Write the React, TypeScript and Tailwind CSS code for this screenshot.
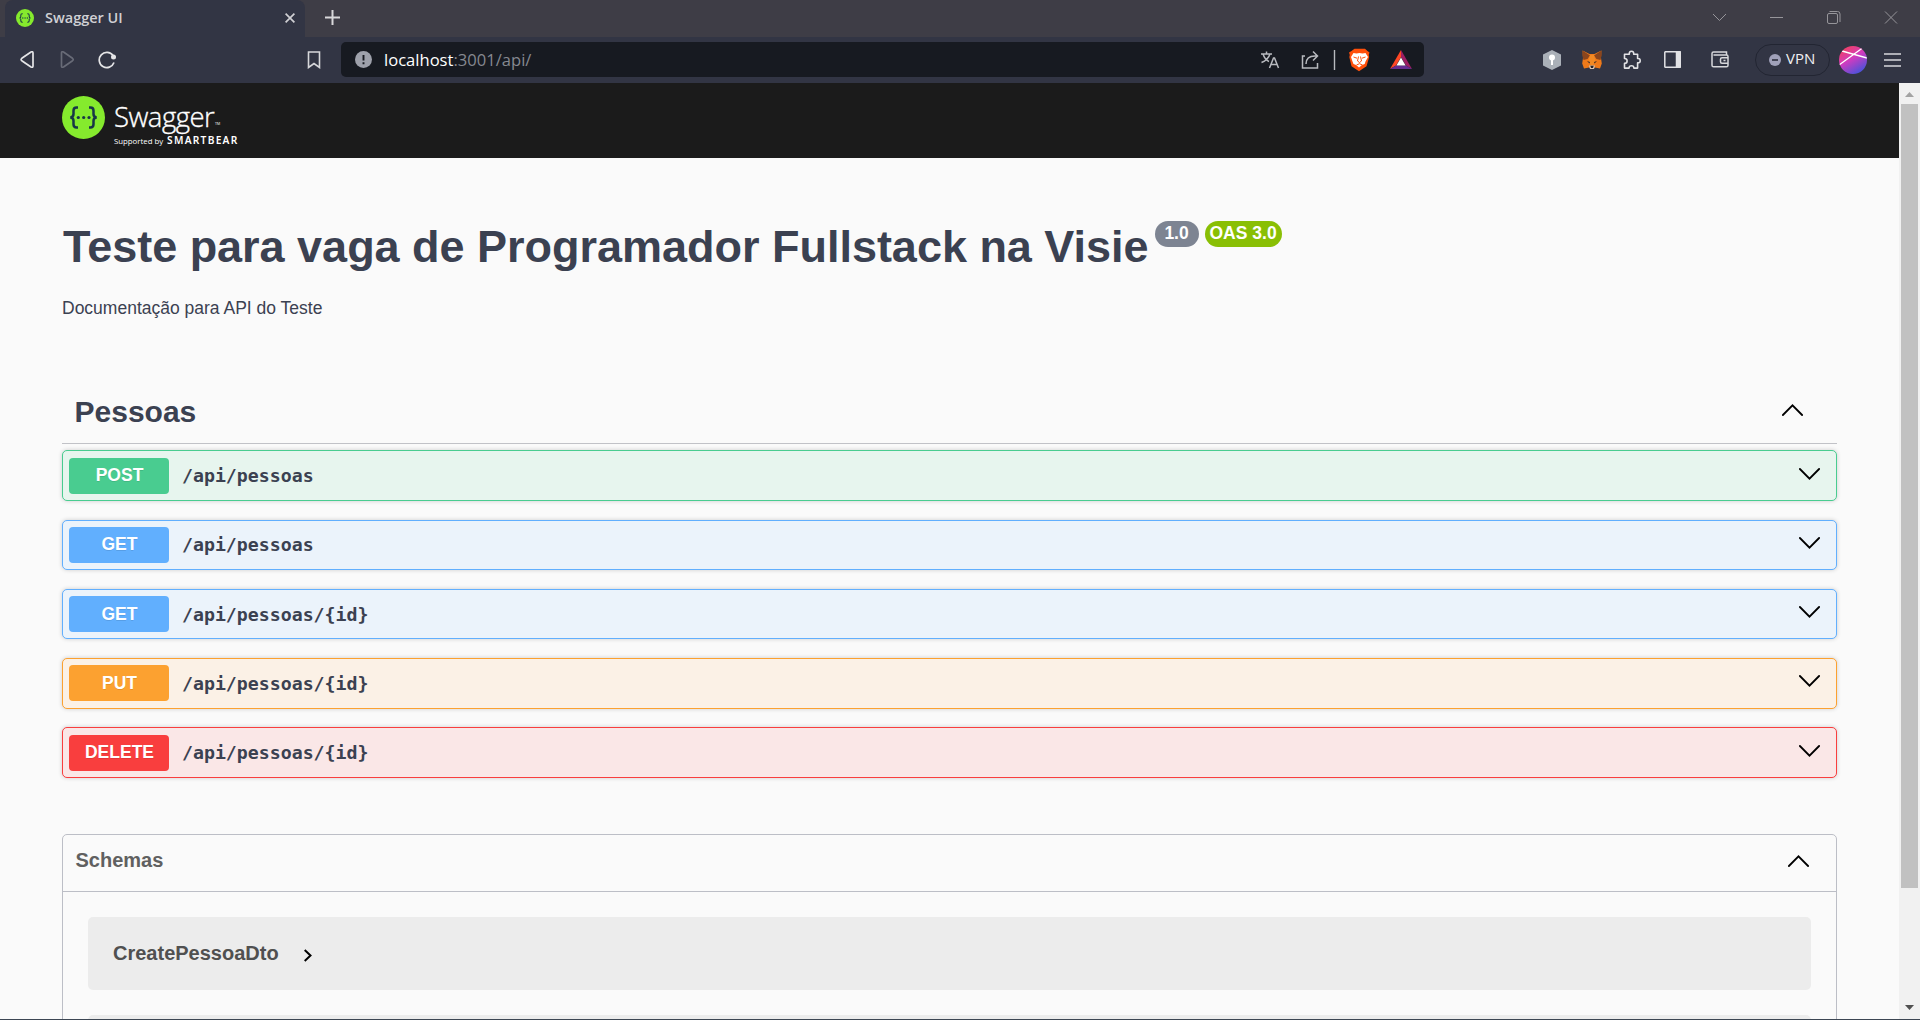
import React from "react";

const ARIAL = "font-['Liberation_Sans',Arial,sans-serif]";
const UI = "font-['Open_Sans','Noto_Sans',sans-serif]";

function SwaggerMark({ className }: { className: string }) {
  return (
    <svg className={className} viewBox="0 0 43 43">
      <circle cx="21.5" cy="21.5" r="21.5" fill="#85ea2d" />
      <g fill="none" stroke="#173647" strokeWidth="2.5">
        <path d="M16 11.5h-1.4q-3.1 0-3.1 3.2v3.3q0 3.2-3.2 3.4q3.2.2 3.2 3.4v3.5q0 3.2 3.1 3.2H16" />
        <path d="M27 11.5h1.4q3.1 0 3.1 3.2v3.3q0 3.2 3.2 3.4q-3.2.2-3.2 3.4v3.5q0 3.2-3.1 3.2H27" />
      </g>
      <g fill="#173647">
        <circle cx="16.3" cy="21.5" r="1.6" />
        <circle cx="21.7" cy="21.5" r="1.6" />
        <circle cx="27" cy="21.5" r="1.6" />
      </g>
    </svg>
  );
}

function TabStrip() {
  return (
    <div className="flex h-[37px] shrink-0 bg-[#3e3d46] pl-[5px]">
      <div className="flex w-[300px] items-center rounded-t-lg bg-[#323544] pb-px pl-[11px] pr-[10px]">
        <SwaggerMark className="size-[18px]" />
        <span className={`${UI} ml-[11px] flex-1 text-[14.2px] font-semibold leading-5 text-[#d0d0d4]`}>
          <span className="inline-block origin-left scale-x-[1.02]">Swagger UI</span>
        </span>
        <svg className="size-[10px]" viewBox="0 0 10 10" stroke="#d0d0d4" strokeWidth="1.7">
          <path d="M.6.6l8.8 8.8M9.4.6L.6 9.4" />
        </svg>
      </div>
      <svg className="ml-5 mt-[10px] size-[15px]" viewBox="0 0 15 15" stroke="#d8d8da" strokeWidth="2">
        <path d="M7.5 0v15M0 7.5h15" />
      </svg>
      <svg className="ml-auto mr-[18px] mt-2 h-5 w-[196px]" viewBox="0 0 196 20" fill="none" stroke="#96959a" strokeWidth="1">
        <path d="M7 6l6.500 6.500l6.500-6.500M64 9.500h13" />
        <rect x="121.500" y="5.500" width="10" height="10" rx="1.500" />
        <path d="M123.500 3.500h8q2.500 0 2.500 2.500v8M179 3.500l12 12M191 3.500l-12 12" />
      </svg>
    </div>
  );
}

function MetaMask() {
  return (
    <svg className="h-5 w-5" viewBox="0 0 20 20">
      <path d="M.6.500L7.500 4h5L19.400.500 19 8l.8 5.500L18 18.500l-5-1-3 1.500-3-1.500-5 1L.2 13.500 1 8z" fill="#ef7a1a" />
      <path d="M.6.500l7.400 5L5.500 9 1.500 10 .3 5zM19.400.500L12 5.500 14.500 9l4 1 1.200-5z" fill="#8a451d" />
      <path d="M8 5h4l1.500 6L10 17l-3.500-6z" fill="#f28a24" />
      <path d="M5 11l3 1-.5 1.500zM15 11l-3 1 .5 1.500z" fill="#3c2b28" />
      <path d="M7 15.500h6L12 19H8z" fill="#d9c4b2" />
      <path d="M8.300 15.700h3.400l-.7 2.300H9z" fill="#26252b" />
    </svg>
  );
}

function AddressIcons() {
  return (
    <svg className="mr-[10px] h-6 w-[155px]" viewBox="0 0 155 24" fill="none" stroke="#b8babf" strokeWidth="1.500">
      <path d="M2 6h11M7.500 3.500V6M4 6q2 6 6 7.500M11 6q-2 6-8.500 8.500M10.500 20l4-10h1l4 10M12 16.500h6" />
      <path d="M46 8h-2.500v12h15V15M47 16q0-8 9-8h2M54 3.500l4.500 4.500-4.500 4.500" />
      <path d="M75.500 2v20" strokeWidth="1.400" />
      <path d="M95.500.8h10.500l2.500 2.200 2 1.500-.8 2.500.5 2-2.700 9.300-7.500 5-7.500-5L90.300 9l.5-2L90 4.500 92.500 3z" fill="#ff4f0a" stroke="none" />
      <path d="M94.500 5l3 .5 3-.5 3 .5 3-.5 2.500 4-2.500 4.500-.8 2.500-2.700 1-3 2.500-3-2.500-2.500-1-1-2.500L92 9z" fill="#fff" stroke="none" />
      <path d="M94.500 9l3.500 1.200M106.500 9l-3.500 1.200M99.500 8.500l-1 4.500 2 1.500 2-1.500-1-4.500M97.500 17l3-1.300 3 1.300" stroke="#ff4f0a" strokeWidth="1" />
      <g stroke="none">
        <path d="M142 2v7l-5 8.500-6 3.500z" fill="#ff4724" />
        <path d="M142 2v7l5 8.500 6 3.500z" fill="#9e1f63" />
        <path d="M131 21l6-3.500h10l6 3.500z" fill="#662d91" />
        <path d="M142 9.500l4.600 8h-9.200z" fill="#fff" />
      </g>
    </svg>
  );
}

function Toolbar() {
  return (
    <div className="flex h-[46px] shrink-0 items-center bg-[#323544] pb-px">
      <svg className="ml-5 h-[18px] w-24" viewBox="0 0 96 18" fill="none" strokeWidth="1.7" strokeLinejoin="round">
        <path d="M11 1q2-.8 2 1v13q0 1.800-2 1L1.800 9.700q-1.500-1.200 0-2.400z" stroke="#e5e5e7" />
        <path d="M43.500 1q-2-.8-2 1v13q0 1.800 2 1l9-6.300q1.500-1.200 0-2.400z" stroke="#686b77" />
        <path d="M93 4.500A7.600 7.600 0 1 0 94 11.500" stroke="#e5e5e7" />
        <circle cx="93.500" cy="6" r="2.500" fill="#e5e5e7" />
      </svg>
      <svg className="ml-[191px] h-[18px] w-[14px]" viewBox="0 0 14 18" fill="none" stroke="#d7d8db" strokeWidth="1.600">
        <path d="M1.500 1h11v15.500L7 12.500l-5.500 4z" />
      </svg>
      <div className="ml-5 flex h-[35px] w-[1083px] items-center rounded-[5px] bg-[#171a21] pl-[14px]">
        <svg className="size-[17px]" viewBox="0 0 17 17">
          <circle cx="8.500" cy="8.500" r="8.500" fill="#9ea1ab" />
          <path d="M8.500 4v5.500M8.500 11.200v2" stroke="#171a21" strokeWidth="1.900" />
        </svg>
        <div className={`${UI} ml-3 flex-1 text-[17px] leading-6 text-[#858890]`}>
          <span className="inline-block origin-left scale-x-[.975]">
            <span className="text-white">localhost</span>:3001/api/
          </span>
        </div>
        <AddressIcons />
      </div>
      <div className="ml-[119px] flex flex-1 items-center">
        <svg className="h-5 w-[18px]" viewBox="0 0 18 20">
          <path d="M9 0l9 4.500v11L9 20l-9-4.500v-11z" fill="#aab0b8" />
          <circle cx="9" cy="7.500" r="3" fill="#fff" />
          <path d="M9 9v6" stroke="#fff" strokeWidth="2" />
        </svg>
        <div className="ml-[21px]">
          <MetaMask />
        </div>
        <svg className="ml-[21px] h-5 w-[18px]" viewBox="0 0 18 20" fill="none" stroke="#e2e2e5" strokeWidth="1.600" strokeLinejoin="round">
          <path d="M1.500 4.300h4.800q-.3-3 2.200-3t2.200 3h3.900v4.200q2.600-.2 2.600 2.200t-2.600 2.200v5.200h-3.800q.1-2.400-2.300-2.400t-2.400 2.400H1.500v-4.700q2.600 0 2.600-2.500T1.500 8.500z" />
        </svg>
        <svg className="ml-[23px] h-[17px] w-[17px]" viewBox="0 0 17 17" fill="none" stroke="#e2e2e5" strokeWidth="1.500">
          <rect x=".8" y=".8" width="15.400" height="15.400" rx=".5" />
          <path d="M12.500 1h3.700v15h-3.700z" fill="#e2e2e5" />
        </svg>
        <svg className="ml-[30px] h-[17px] w-[18px]" viewBox="0 0 18 17" fill="none" stroke="#d7d8db" strokeWidth="1.500">
          <path d="M15.500 4V1H2.500Q1 1 1 2.500v11.700q0 1.600 1.600 1.600h12.900q1.500 0 1.500-1.600V5.500Q17 4 15.500 4H2.500M17 6.800h-6q-1.500 0-1.500 1.500v2.400q0 1.500 1.500 1.500h6M12.500 9.500h2" />
        </svg>
        <div className="ml-[26px] flex h-8 w-[75px] items-center rounded-full border border-[#222532] pl-[13px]">
          <svg className="size-3" viewBox="0 0 12 12">
            <circle cx="6" cy="6" r="6" fill="#a0a1b9" />
            <path d="M3 6h6" stroke="#323544" strokeWidth="1.700" />
          </svg>
          <span className={`${UI} -mt-[3px] ml-[5px] text-[15px] leading-5 text-[#f0f0f2]`}>VPN</span>
        </div>
        <svg className="ml-[9px] size-7" viewBox="0 0 28 28">
          <defs>
            <linearGradient id="avatar" x1=".2" y1="0" x2=".8" y2="1">
              <stop offset="0" stopColor="#f4415c" />
              <stop offset=".45" stopColor="#cf3bc0" />
              <stop offset="1" stopColor="#3a55dd" />
            </linearGradient>
            <clipPath id="disc">
              <circle cx="14" cy="14" r="14" />
            </clipPath>
          </defs>
          <circle cx="14" cy="14" r="14" fill="url(#avatar)" />
          <path d="M0 19L23.500 2M3 5l25 7" stroke="#fff" strokeWidth="1.300" clipPath="url(#disc)" />
        </svg>
        <svg className="ml-[17px] h-[14px] w-[17px]" viewBox="0 0 17 14" stroke="#d7d8db" strokeWidth="1.500">
          <path d="M0 1h17M0 7h17M0 13h17" />
        </svg>
      </div>
    </div>
  );
}

function Chevron({ up, className }: { up?: boolean; className: string }) {
  return (
    <svg className={`h-3 w-[22px] ${className}`} viewBox="0 0 22 12" fill="none" stroke="#000" strokeWidth="1.800" strokeLinecap="round">
      <path d={up ? "M.9 11L10.500 1.300L20.100 11" : "M.9 1L10.500 10.700L20.100 1"} />
    </svg>
  );
}

const operations = [
  { verb: "POST", path: "/api/pessoas", row: "mt-[6px] h-[51px] pt-[7px] border-[#49cc90] bg-[#e7f5ee]", tag: "leading-[34px] bg-[#49cc90]", label: "leading-9" },
  { verb: "GET", path: "/api/pessoas", row: "mt-[19px] h-[50px] pt-[6px] border-[#61affe] bg-[#ebf3fb]", tag: "leading-[34px] bg-[#61affe]", label: "leading-9" },
  { verb: "GET", path: "/api/pessoas/{id}", row: "mt-[19px] h-[50px] pt-[6px] border-[#61affe] bg-[#ebf3fb]", tag: "leading-9 bg-[#61affe]", label: "leading-[38px]" },
  { verb: "PUT", path: "/api/pessoas/{id}", row: "mt-[19px] h-[51px] pt-[6px] border-[#fca130] bg-[#fbf1e6]", tag: "leading-9 bg-[#fca130]", label: "leading-[38px]" },
  { verb: "DELETE", path: "/api/pessoas/{id}", row: "mt-[18px] h-[51px] pt-[7px] border-[#f93e3e] bg-[#fae7e7]", tag: "leading-[34px] bg-[#f93e3e]", label: "leading-9" },
];

function TopBar() {
  return (
    <header className="flex h-[75px] bg-[#1b1b1b] pl-[62px] pt-[13px]">
      <SwaggerMark className="size-[43px]" />
      <div className={`${UI} ml-[9px] text-white`}>
        <div className="flex h-[38px] items-end">
          <span className="w-[101px] whitespace-nowrap text-[27.500px] font-light leading-[34px] tracking-[-0.500px] [-webkit-text-stroke:0.35px_white]">Swagger</span>
          <span className="pb-[8px] text-[3.500px] leading-[5px]">TM</span>
        </div>
        <div className="flex h-3 items-center whitespace-nowrap">
          <span className="w-[53px] pt-0.5 text-[7.800px] leading-3">Supported by</span>
          <span className="font-['Noto_Sans',sans-serif] text-[10.200px] font-semibold leading-3 tracking-[1.280px]">SMARTBEAR</span>
        </div>
      </div>
    </header>
  );
}

function ApiPage() {
  return (
    <main className="min-w-0 flex-1 overflow-hidden bg-[#fafafa] text-[#3b4151]">
      <TopBar />
      <div className="ml-[62px] w-[1775px]">
        <div className="flex pl-px pt-[62px]">
          <h1 className="whitespace-nowrap text-[45px] font-bold leading-[54px] tracking-[-0.015px]">Teste para vaga de Programador Fullstack na Visie</h1>
          <div className="ml-[6px] mt-px flex h-[26px] gap-[6px] whitespace-nowrap text-center text-[17.500px] font-bold leading-6 text-white">
            <span className="w-11 rounded-full bg-[#7d8492]">1.0</span>
            <span className="w-[77px] rounded-full bg-[#89bf04]">OAS 3.0</span>
          </div>
        </div>
        <p className="mt-[22px] text-[17.500px] leading-6">Documentação para API do Teste</p>

        <div className="mt-[63px] flex h-[61px] justify-between border-b border-[#c1c2c7] pl-[12.500px]">
          <h2 className="mt-[11px] text-[30px] font-bold leading-9">Pessoas</h2>
          <Chevron up className="mr-[33px] mt-[21px]" />
        </div>

        {operations.map((op, i) => (
          <div key={i} className={`flex rounded-[5px] border pl-[6px] shadow-[0_0_4px_rgba(0,0,0,0.19)] ${op.row}`}>
            <span className={`h-9 w-[100px] rounded-[4px] pl-px text-center text-[17.500px] font-bold text-white [text-shadow:0_1px_0_rgba(0,0,0,0.1)] ${op.tag}`}>
              {op.verb}
            </span>
            <span className={`ml-[13px] flex-1 font-['DejaVu_Sans_Mono',monospace] text-[18.230px] font-bold ${op.label}`}>{op.path}</span>
            <Chevron className="mr-[15px] mt-[10px]" />
          </div>
        ))}

        <section className="mt-14 h-[300px] rounded-[5px] border border-[#bcbec6]">
          <div className="flex h-[57px] justify-between border-b border-[#bcbec6] pl-[12.500px] pt-[13px]">
            <h3 className="text-xl font-bold leading-6 text-[#606060]">Schemas</h3>
            <Chevron up className="mr-[26px] mt-[7px]" />
          </div>
          <div className="mx-[25px] mt-[25px] flex h-[73px] rounded-[5px] bg-[#ececec] pl-[25px] pt-6">
            <span className="text-xl font-bold leading-6 text-[#505050]">CreatePessoaDto</span>
            <svg className="ml-6 mt-2 h-[13px] w-[9px]" viewBox="0 0 9 13" fill="none" stroke="#000" strokeWidth="2">
              <path d="M1.700 1l5.800 5.500L1.700 12" />
            </svg>
          </div>
          <div className="mx-[25px] mt-[25px] h-[73px] rounded-[5px] bg-[#ececec]" />
        </section>
      </div>
    </main>
  );
}

function Scrollbar() {
  return (
    <div className="flex w-[21px] shrink-0 flex-col items-center bg-[#f1f1f1]">
      <svg className="mt-[9px] h-[5px] w-[9px]" viewBox="0 0 9 5">
        <path d="M4.500 0L9 5H0z" fill="#a3a3a3" />
      </svg>
      <div className="mt-[7px] h-[784px] w-[17px] bg-[#c1c1c1]" />
      <svg className="mb-[9px] mt-auto h-[5px] w-[9px]" viewBox="0 0 9 5">
        <path d="M0 0h9L4.500 5z" fill="#505050" />
      </svg>
    </div>
  );
}

export default function App() {
  return (
    <div className={`${ARIAL} flex h-[1020px] w-[1920px] flex-col overflow-hidden bg-[#fafafa]`}>
      <TabStrip />
      <Toolbar />
      <div className="flex min-h-0 flex-1 border-b border-[#3c4653]">
        <ApiPage />
        <Scrollbar />
      </div>
    </div>
  );
}
